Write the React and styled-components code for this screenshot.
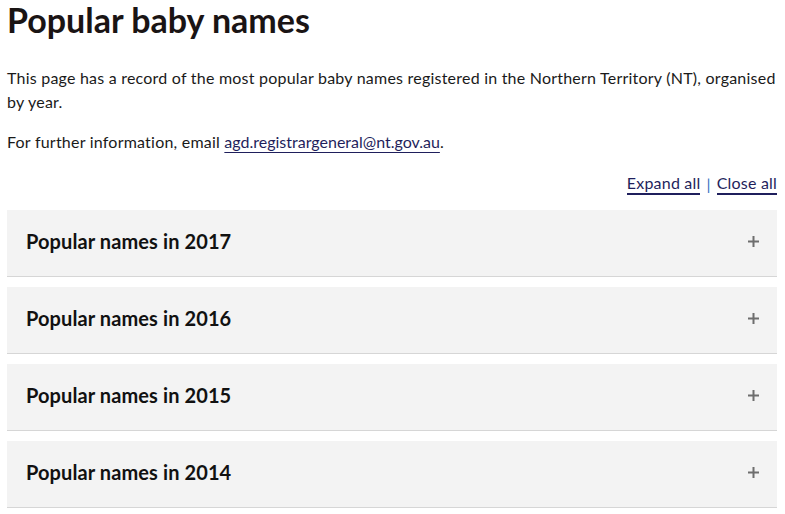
import React from "react";
import styled, { createGlobalStyle } from "styled-components";

const GlobalStyle = createGlobalStyle`
  body {
    margin: 0;
    background: #ffffff;
    font-family: Lato, "Open Sans", sans-serif;
    color: #1a1a1a;
  }
`;

const Page = styled.main`
  padding: 0 8px 0 7px;
`;

const Title = styled.h1`
  margin: 0;
  font-size: 34px;
  font-weight: 700;
  line-height: 40px;
  color: #1a1414;
`;

const Text = styled.p`
  margin: ${(p) => p.$top || 0}px 0 0;
  font-size: 16px;
  line-height: 24px;
  letter-spacing: 0.22px;
  color: #1a1a1a;
`;

const MailLink = styled.a`
  color: #1f1f5c;
  letter-spacing: 0;
  text-decoration: underline;
  text-underline-offset: 4px;
  text-decoration-thickness: 1px;
`;

const Controls = styled.div`
  display: flex;
  justify-content: flex-end;
  align-items: center;
  gap: 6px;
  margin-top: 19px;
  font-size: 16px;
  line-height: 20px;
  letter-spacing: 0.2px;
`;

const ControlLink = styled.a`
  color: #1f1f5c;
  text-decoration: none;
  border-bottom: 2px solid #1f1f5c;
  cursor: pointer;
`;

const Divider = styled.span`
  color: #2f6fbf;
`;

const List = styled.div`
  display: flex;
  flex-direction: column;
  gap: 10px;
  margin-top: 15px;
`;

const Item = styled.div`
  background: #f3f3f3;
  border-bottom: 1px solid #d6d6d6;
`;

const Header = styled.button`
  display: flex;
  width: 100%;
  height: 66px;
  align-items: center;
  justify-content: space-between;
  padding: 0 18px 4px 19px;
  border: 0;
  background: transparent;
  font-family: inherit;
  cursor: pointer;
`;

const ItemTitle = styled.span`
  font-size: 20px;
  font-weight: 700;
  letter-spacing: 0.1px;
  color: #111111;
`;

const Plus = styled.svg`
  width: 11px;
  height: 11px;
  stroke: #6e6e6e;
  stroke-width: 2;
`;

const years = [2017, 2016, 2015, 2014];

export default function App() {
  return (
    <Page>
      <GlobalStyle />
      <Title>Popular baby names</Title>
      <Text $top={26}>
        This page has a record of the most popular baby names registered in the
        Northern Territory (NT), organised by year.
      </Text>
      <Text $top={16}>
        For further information, email{" "}
        <MailLink href="#">agd.registrargeneral@nt.gov.au</MailLink>.
      </Text>
      <Controls>
        <ControlLink>Expand all</ControlLink>
        <Divider>|</Divider>
        <ControlLink>Close all</ControlLink>
      </Controls>
      <List>
        {years.map((y) => (
          <Item key={y}>
            <Header>
              <ItemTitle>Popular names in {y}</ItemTitle>
              <Plus viewBox="0 0 11 11">
                <path d="M5.5 0V11M0 5.5H11" />
              </Plus>
            </Header>
          </Item>
        ))}
      </List>
    </Page>
  );
}
